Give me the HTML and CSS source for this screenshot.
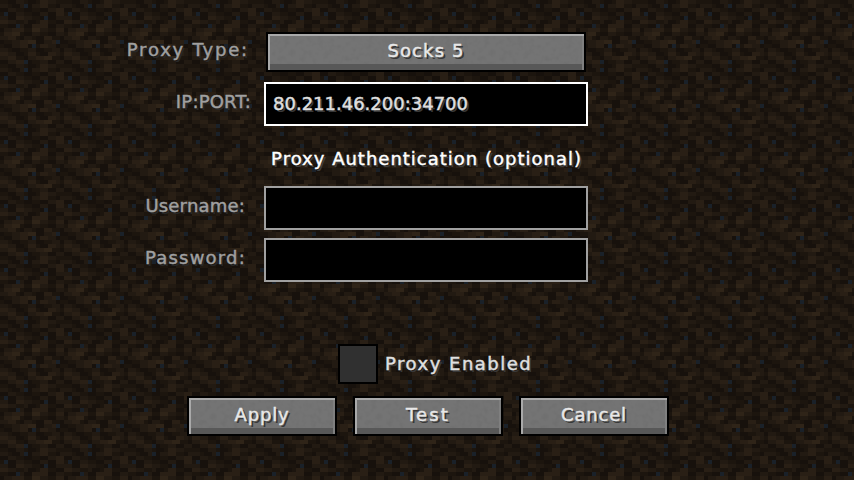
FILE: index.html
```html
<!DOCTYPE html>
<html lang="en">
<head>
    <meta charset="UTF-8">
    <title>Proxy Settings</title>
    <link rel="stylesheet" href="styles.css">
</head>
<body>

    <div id="proxy-screen">
        <div class="row row-type">
            <span class="label label-type">Proxy Type:</span>
            <div class="mc-button type-button"><span class="socks-text">Socks 5</span></div>
        </div>

        <div class="row row-ip">
            <span class="label label-ip">IP:PORT:</span>
            <div class="text-field focused"><span class="ip-text">80.211.46.200:34700</span></div>
        </div>

        <div class="auth-title">Proxy Authentication (optional)</div>

        <div class="row">
            <span class="label label-user">Username:</span>
            <div class="text-field"></div>
        </div>
        <div class="row row-pass">
            <span class="label label-pass">Password:</span>
            <div class="text-field"></div>
        </div>

        <div class="enabled-row">
            <div class="checkbox"></div>
            <span class="enabled-text">Proxy Enabled</span>
        </div>

        <div class="actions">
            <div class="mc-button action-button"><span class="apply-text">Apply</span></div>
            <div class="mc-button action-button"><span class="test-text">Test</span></div>
            <div class="mc-button action-button"><span class="cancel-text">Cancel</span></div>
        </div>
    </div>

    <script src="background.js"></script>
</body>
</html>
```

FILE: styles.css
```css
body {
    margin: 0;
    width: 854px;
    height: 480px;
    overflow: hidden;
    background-color: #221a12;
    background-size: 64px 64px;
    font-family: "DejaVu Sans", sans-serif;
    font-size: 18px;
    line-height: 20px;
    -webkit-text-stroke: 0.45px currentColor;
}

#proxy-screen {
    display: flex;
    flex-direction: column;
    width: 588px;
    padding-top: 32px;
}

.row {
    display: flex;
    justify-content: flex-end;
    align-items: center;
}

.row-ip {
    margin-top: 10px;
}

.row-pass {
    margin-top: 8px;
}

.label {
    color: #a0a0a0;
    text-shadow: 2px 2px 0 #282828;
    margin-bottom: 5px;
}

.label-type { margin-right: 17px; letter-spacing: 1.8px; }
.label-ip { margin-right: 13px; letter-spacing: 0.2px; }
.label-user { margin-right: 19px; letter-spacing: 0.2px; }
.label-pass { margin-right: 18px; letter-spacing: 1.2px; }

.mc-button {
    box-sizing: border-box;
    height: 40px;
    display: flex;
    justify-content: center;
    align-items: center;
    border: 2px solid #000;
    background-color: #747474;
    background-image: url("data:image/svg+xml,%3Csvg xmlns='http://www.w3.org/2000/svg' width='200' height='40'%3E%3Cfilter id='n'%3E%3CfeTurbulence type='fractalNoise' baseFrequency='0.18' numOctaves='2' seed='4'/%3E%3CfeColorMatrix values='0 0 0 0 0 0 0 0 0 0 0 0 0 0 0 1.4 0 0 0 -0.6'/%3E%3C/filter%3E%3Crect width='200' height='40' filter='url(%23n)' opacity='0.06'/%3E%3C/svg%3E");
    color: #e8e8e8;
    text-shadow: 2px 2px 0 #383838;
    box-shadow: inset 2px 2px 0 #a9a9a9, inset -2px 0 0 #7f7f7f, inset 0 -6px 0 #585858;
    padding-bottom: 2px;
}

.socks-text { letter-spacing: 1.1px; }
.apply-text { letter-spacing: 0.8px; }
.test-text { letter-spacing: 2.2px; }
.cancel-text { letter-spacing: 0.8px; }

.type-button {
    width: 320px;
    margin-right: 2px;
}

.text-field {
    box-sizing: border-box;
    width: 324px;
    height: 44px;
    display: flex;
    align-items: center;
    padding: 0 0 0 7px;
    border: 2px solid #a0a0a0;
    background-color: #000;
    color: #e0e0e0;
    text-shadow: 2px 2px 0 #383838;
}

.text-field.focused {
    border-color: #fff;
}

.auth-title {
    height: 60px;
    display: flex;
    align-items: center;
    justify-content: flex-end;
    padding: 6px 6px 0 0;
    box-sizing: border-box;
    color: #fff;
    text-shadow: 2px 2px 0 #3f3f3f;
    letter-spacing: 1px;
}

.enabled-row {
    display: flex;
    align-items: center;
    gap: 7px;
    margin: 62px 0 0 338px;
    width: 260px;
    color: #e0e0e0;
    text-shadow: 2px 2px 0 #383838;
    letter-spacing: 1.5px;
}

.checkbox {
    box-sizing: border-box;
    width: 40px;
    height: 40px;
    border: 2px solid #000;
    background-color: #303030;
}

.actions {
    display: flex;
    gap: 16px;
    margin: 12px 0 0 187px;
    width: 482px;
}

.action-button {
    width: 150px;
}
```

FILE: background.js
```js
// 16x16 dirt tile, scaled up 4x by background-size
const tileRows = [
    'bbaaccbaabddccbb',
    'ccbaacxaccddbbac',
    'aaccbbaabbaaccdd',
    'bxaaccbbaaccaadd',
    'ccaaddccbbaxaacc',
    'ddccbbcaabddbbaa',
    'bbaaxcaaddddaacc',
    'accdddbbeeccbbdd',
    'bddeebaaccbbaacc',
    'ccddbaccbaaddbba',
    'abbccddeeaaccdxa',
    'baaccddaxbddccab',
    'ccbaabbccaabbcca',
    'ddccaabddbaaddcb',
    'ccddbbaccddeebba',
    'aaccddxabbccaacc'
];
const tileColors = { a: '#17110c', b: '#1c150e', c: '#221a12', d: '#291f15', e: '#2f2418', x: '#1a2129' };

let tileRects = '';
tileRows.forEach((row, y) => {
    row.split('').forEach((cell, x) => {
        tileRects += `<rect x="${x}" y="${y}" width="1" height="1" fill="${tileColors[cell]}"/>`;
    });
});

const tileSvg = `<svg xmlns="http://www.w3.org/2000/svg" width="64" height="64" viewBox="0 0 16 16" shape-rendering="crispEdges">${tileRects}</svg>`;
document.body.style.backgroundImage = `url("data:image/svg+xml,${encodeURIComponent(tileSvg)}")`;
```
